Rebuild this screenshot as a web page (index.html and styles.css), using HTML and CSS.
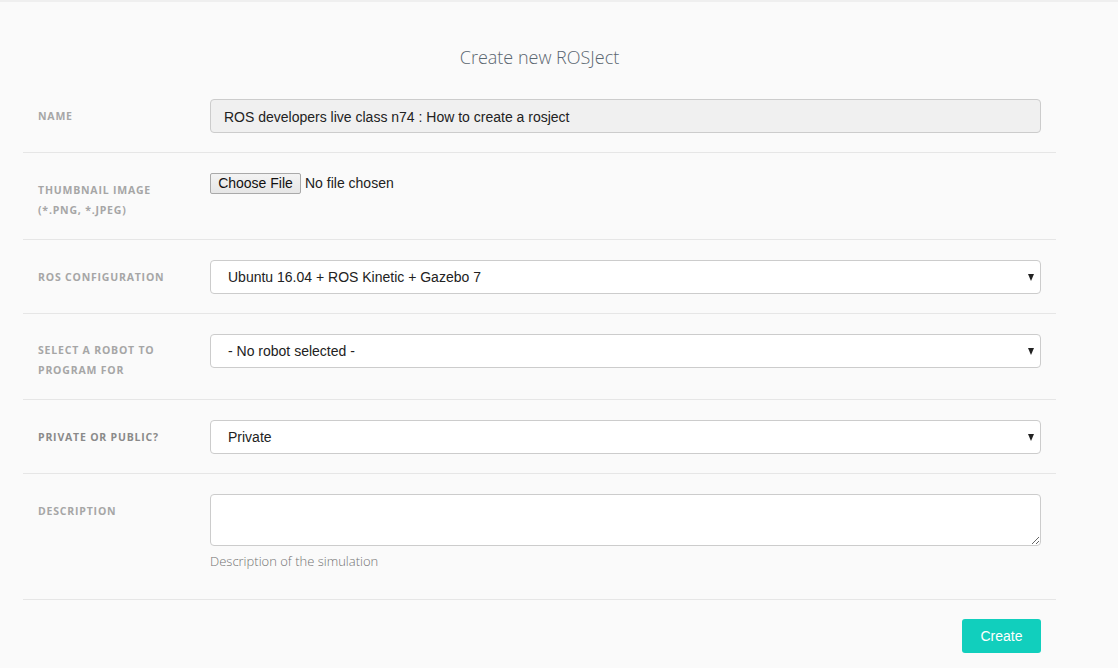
FILE: index.html
```html
<!DOCTYPE html>
<html>
<head>
<meta charset="utf-8">
<link rel="stylesheet" href="styles.css">
</head>
<body>
<div class="page">
  <h1 class="title">Create new ROSJect</h1>
  <form class="form">
    <div class="row">
      <label class="label">Name</label>
      <div class="field"><input class="control readonly" type="text" value="ROS developers live class n74 : How to create a rosject" readonly></div>
    </div>
    <div class="row">
      <label class="label">Thumbnail image<br>(*.png, *.jpeg)</label>
      <div class="field file-field"><span class="file-btn">Choose File</span><span class="file-name">No file chosen</span></div>
    </div>
    <div class="row">
      <label class="label">ROS Configuration</label>
      <div class="field"><div class="control select">Ubuntu 16.04 + ROS Kinetic + Gazebo 7<span class="arrow"></span></div></div>
    </div>
    <div class="row">
      <label class="label two">Select a robot to<br>program for</label>
      <div class="field"><div class="control select">- No robot selected -<span class="arrow"></span></div></div>
    </div>
    <div class="row">
      <label class="label dark">Private or public?</label>
      <div class="field"><div class="control select">Private<span class="arrow"></span></div></div>
    </div>
    <div class="row desc-row">
      <label class="label">Description</label>
      <div class="field"><textarea class="control textarea"></textarea><p class="help">Description of the simulation</p></div>
    </div>
    <div class="actions">
      <button type="button" class="btn-create">Create</button>
    </div>
  </form>
</div>
</body>
</html>
```

FILE: styles.css
```css
html, body {
  margin: 0;
  padding: 0;
  background: #fafafa;
}
body {
  border-top: 2px solid #efefef;
  font-family: "Liberation Sans", Arial, sans-serif;
}
.page {
  width: 1033px;
  margin-left: 23px;
}
.title {
  margin: 0;
  height: 77px;
  box-sizing: border-box;
  padding-top: 43px;
  text-align: center;
  font-family: "Open Sans", sans-serif;
  font-weight: 300;
  font-size: 18px;
  line-height: 24px;
  color: #5a6670;
}
.row {
  display: grid;
  grid-template-columns: 187px 831px;
  align-items: start;
  padding: 20px 0 19px;
  border-bottom: 1px solid #e6e6e6;
}
.label {
  padding-left: 15px;
  padding-top: 7px;
  font-family: "Open Sans", sans-serif;
  font-weight: 700;
  font-size: 10.5px;
  line-height: 20px;
  letter-spacing: 0.8px;
  text-transform: uppercase;
  color: #a6a6a6;
}
.label.two {
  padding-top: 6px;
}
.label.dark {
  color: #8a8a8a;
}
.control {
  box-sizing: border-box;
  width: 831px;
  height: 34px;
  border: 1px solid #cccccc;
  border-radius: 4px;
  background: #ffffff;
  font-family: "Liberation Sans", Arial, sans-serif;
  font-size: 14px;
  color: #222;
  padding: 0 13px;
  margin: 0;
  display: block;
}
.readonly {
  background: #f0f0f0;
  outline: none;
  padding-top: 2px;
}
.select {
  position: relative;
  line-height: 33px;
  padding-left: 17px;
}
.arrow {
  position: absolute;
  right: 6px;
  top: 13px;
  width: 0;
  height: 0;
  border-left: 3.5px solid transparent;
  border-right: 3.5px solid transparent;
  border-top: 7px solid #222;
}
.file-field {
  display: flex;
  align-items: flex-start;
}
.file-btn {
  box-sizing: border-box;
  height: 21px;
  width: 91px;
  border: 1px solid #a9a9a9;
  border-radius: 2px;
  background: linear-gradient(#f3f3f3, #e6e6e6);
  font-size: 14px;
  line-height: 19px;
  text-align: center;
  color: #111;
}
.file-name {
  margin-left: 4px;
  font-size: 14px;
  line-height: 20px;
  color: #222;
}
.textarea {
  height: 52px;
  resize: vertical;
}
.help {
  margin: 6px 0 0 0;
  font-family: "Open Sans", sans-serif;
  font-weight: 300;
  font-size: 13px;
  line-height: 18px;
  color: #737373;
}
.desc-row {
  padding-bottom: 29px;
}
.actions {
  display: flex;
  justify-content: flex-end;
  padding: 19px 15px 0 0;
}
.btn-create {
  width: 79px;
  height: 34px;
  border: none;
  border-radius: 3px;
  background: #11cfbd;
  color: #ffffff;
  font-family: "Liberation Sans", Arial, sans-serif;
  font-size: 14px;
  padding: 0;
}
```
